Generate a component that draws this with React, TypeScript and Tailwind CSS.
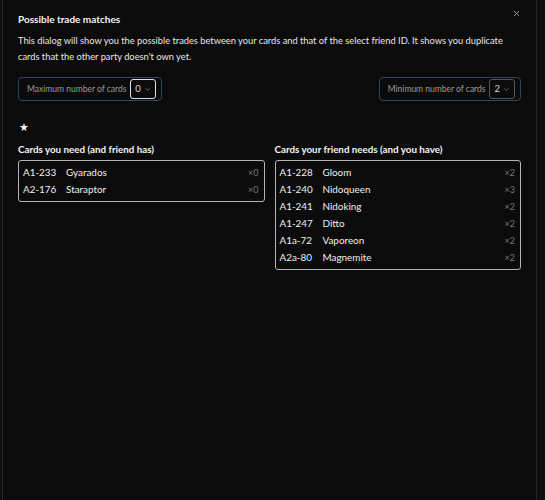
import { X, ChevronDown } from "lucide-react";

type Card = { code: string; name: string; count: number };

const youNeed: Card[] = [
  { code: "A1-233", name: "Gyarados", count: 0 },
  { code: "A2-176", name: "Staraptor", count: 0 },
];

const friendNeeds: Card[] = [
  { code: "A1-228", name: "Gloom", count: 2 },
  { code: "A1-240", name: "Nidoqueen", count: 3 },
  { code: "A1-241", name: "Nidoking", count: 2 },
  { code: "A1-247", name: "Ditto", count: 2 },
  { code: "A1a-72", name: "Vaporeon", count: 2 },
  { code: "A2a-80", name: "Magnemite", count: 2 },
];

function CountFilter({ label, value, focused }: { label: string; value: number; focused?: boolean }) {
  return (
    <div className="flex h-[24px] items-center gap-[4px] rounded-[4px] border border-[#334559] pl-[8px] pr-[5px]">
      <span className="text-[8.5px] text-[#9a9a9a]">{label}</span>
      <span
        className={`flex h-[20px] items-center gap-[3px] rounded-[3px] border px-[4px] text-[9.5px] text-[#d8d8d8] ${
          focused ? "border-[#e0e0e0]" : "border-[#555]"
        }`}
      >
        {value}
        <ChevronDown className="h-[7px] w-[7px] text-[#aaa]" strokeWidth={2} />
      </span>
    </div>
  );
}

function CardList({ title, cards }: { title: string; cards: Card[] }) {
  return (
    <div className="flex-1">
      <h3 className="mb-[3px] text-[9.8px] font-bold leading-[16px] text-[#f4f4f4]">{title}</h3>
      <ul className="rounded-[3px] border border-[#b5b5b5] py-[3px] pl-[4px] pr-[5px]">
        {cards.map((card) => (
          <li key={card.code} className="flex h-[17px] items-center text-[9.9px] text-[#f0f0f0]">
            <span className="w-[43px]">{card.code}</span>
            <span className="flex-1">{card.name}</span>
            <span className="text-[9px] text-[#777]">×{card.count}</span>
          </li>
        ))}
      </ul>
    </div>
  );
}

export default function App() {
  return (
    <div className="flex h-[500px] w-[545px] bg-[#0f0f0f]" style={{ fontFamily: "Lato, 'Noto Sans', sans-serif" }}>
      <div className="relative ml-[2px] w-[535px] border-x border-[#262626] bg-[#0b0b0b] px-[15px] pt-[9px]">
        <button className="absolute right-[15px] top-[9px] text-[#bbb]">
          <X className="h-[9px] w-[9px]" strokeWidth={2} />
        </button>
        <h2 className="text-[10px] font-bold leading-[20px] text-[#f4f4f4]">Possible trade matches</h2>
        <p className="mt-[4px] text-[9.3px] leading-[16px] text-[#e8e8e8]">
          This dialog will show you the possible trades between your cards and that of the select friend ID. It shows
          you duplicate cards that the other party doesn&apos;t own yet.
        </p>
        <div className="mt-[12px] flex justify-between">
          <CountFilter label="Maximum number of cards" value={0} focused />
          <CountFilter label="Minimum number of cards" value={2} />
        </div>
        <div className="mt-[18px] pl-[1px] text-[11px] leading-[16px] text-[#f0f0f0]">&#9733;</div>
        <div className="mt-[6px] flex items-start gap-[10px]">
          <CardList title="Cards you need (and friend has)" cards={youNeed} />
          <CardList title="Cards your friend needs (and you have)" cards={friendNeeds} />
        </div>
      </div>
    </div>
  );
}
